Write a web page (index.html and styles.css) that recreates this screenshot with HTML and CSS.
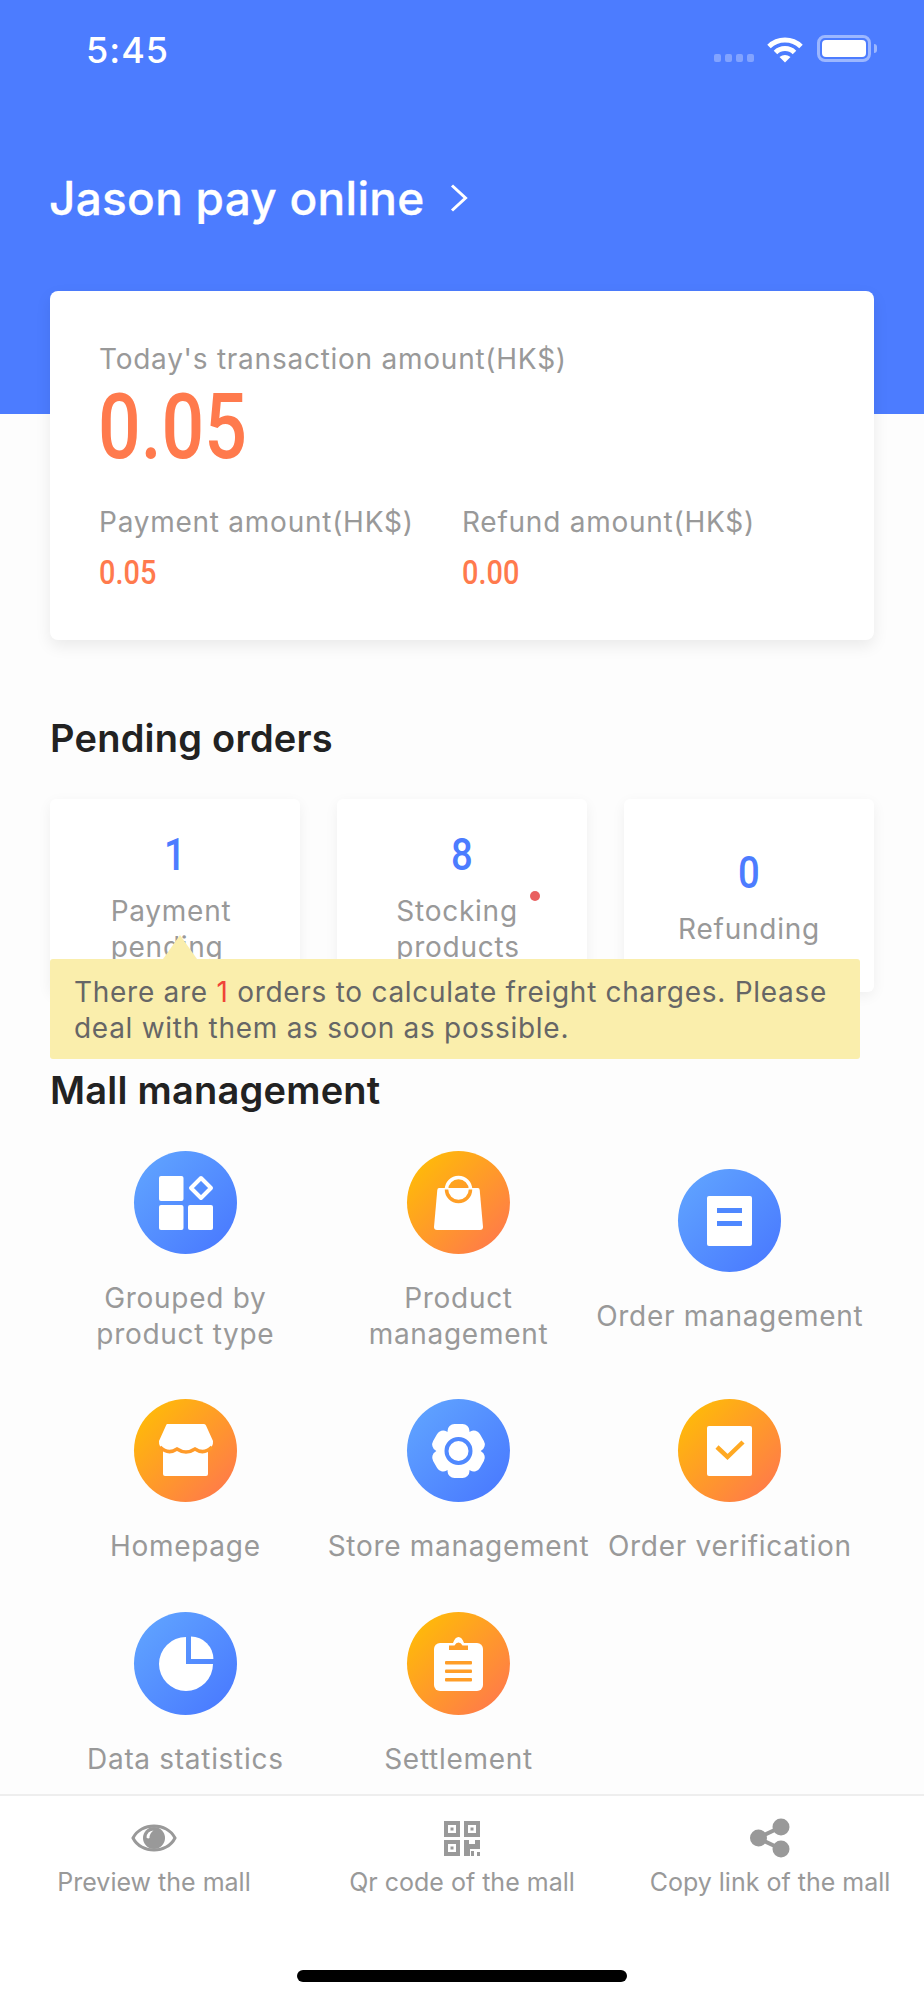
FILE: index.html
```html
<!DOCTYPE html>
<html lang="en">
<head>
<meta charset="utf-8">
<title>Jason pay online</title>
<link rel="stylesheet" href="styles.css">
</head>
<body>
<div class="app">
  <header class="hero">
    <div class="status">
      <span class="time">5:45</span>
      <div class="status-icons">
        <div class="signal"><i></i><i></i><i></i><i></i></div>
        <svg class="wifi" width="38" height="28" viewBox="0 0 38 28"><path d="M3 11.5A23 23 0 0 1 35 11.5M9.5 17.5A13.5 13.5 0 0 1 28.500 17.500" fill="none" stroke="#fff" stroke-width="5"/><path d="M13.500 22Q19 18 24.500 22L19 27.500Z" fill="#fff"/></svg>
        <div class="battery"><div class="battery-fill"></div></div>
        <div class="battery-nub"></div>
      </div>
    </div>
    <div class="shop">
      <span class="shop-name">Jason pay online</span>
      <svg class="chevron" width="18" height="28" viewBox="0 0 18 28"><path d="M2 1.500L15.500 14L2 26.500" fill="none" stroke="#fff" stroke-width="3"/></svg>
    </div>
  </header>

  <section class="summary">
    <div class="muted-label">Today's transaction amount(HK$)</div>
    <div class="amount-big"><span>0.05</span></div>
    <div class="summary-row">
      <div class="summary-col">
        <div class="muted-label">Payment amount(HK$)</div>
        <div class="amount-small"><span>0.05</span></div>
      </div>
      <div class="summary-col">
        <div class="muted-label">Refund amount(HK$)</div>
        <div class="amount-small"><span>0.00</span></div>
      </div>
    </div>
  </section>

  <h2 class="heading">Pending orders</h2>
  <section class="pending">
    <div class="pending-card">
      <div class="pending-num"><span>1</span></div>
      <div class="pending-label shifted">Payment<br>pending</div>
    </div>
    <div class="pending-card">
      <div class="pending-num"><span>8</span></div>
      <div class="pending-label shifted">Stocking<br>products<i class="red-dot"></i></div>
    </div>
    <div class="pending-card">
      <div class="pending-num"><span>0</span></div>
      <div class="pending-label">Refunding</div>
    </div>
    <div class="tip">
      There are <em class="tip-count">1</em> orders to calculate freight charges. Please deal with them as soon as possible.
    </div>
  </section>

  <h2 class="heading">Mall management</h2>
  <section class="mall">
    <div class="mall-item">
      <div class="circle blue">
        <svg viewBox="0 0 103 103"><g fill="#fff"><rect x="25" y="25" width="24.500" height="25" rx="2"/><rect x="25" y="54" width="24.500" height="25" rx="2"/><rect x="54" y="54" width="25" height="25" rx="2"/></g><path d="M67 27L77 37L67 47L57 37Z" fill="none" stroke="#fff" stroke-width="4" stroke-linejoin="round"/></svg>
      </div>
      <div class="mall-label">Grouped by<br>product type</div>
    </div>
    <div class="mall-item">
      <div class="circle orange">
        <svg viewBox="0 0 103 103"><path d="M32 37H71Q72.500 37 72.700 39L76 76Q76 79 73 79H30Q27 79 27 76L30.300 39Q30.500 37 32 37Z" fill="#fff"/><path d="M39.500 38.500A12 12 0 0 1 63.500 38.500" fill="none" stroke="#fff" stroke-width="3.500"/><path d="M39.500 38.500A12 12 0 0 0 63.500 38.500" fill="none" stroke="#ff9f26" stroke-width="3.500"/></svg>
      </div>
      <div class="mall-label">Product<br>management</div>
    </div>
    <div class="mall-item one-line">
      <div class="circle blue">
        <svg viewBox="0 0 103 103"><rect x="29" y="27" width="45" height="50" rx="2" fill="#fff"/><rect x="39" y="39" width="25" height="5" fill="#4f88ff"/><rect x="39" y="52" width="25" height="5" fill="#4f88ff"/></svg>
      </div>
      <div class="mall-label">Order management</div>
    </div>
    <div class="mall-item">
      <div class="circle orange">
        <svg viewBox="0 0 103 103"><rect x="29" y="50" width="45" height="27" rx="2" fill="#fff"/><path d="M33 25H70Q71.500 25 72 26.500L79 42Q79.500 48 74 50.500Q68 53 61.500 49Q57 53 52 53Q47 53 43 49Q36 53 30 50.500Q24.500 48 25 42L32 26.500Q32.500 25 33 25Z" fill="#fff"/><path d="M26 48Q34 56 43 50Q52 56 61 50Q70 56 78 48" fill="none" stroke="#ff9b2a" stroke-width="3.500"/></svg>
      </div>
      <div class="mall-label">Homepage</div>
    </div>
    <div class="mall-item">
      <div class="circle blue">
        <svg viewBox="0 0 103 103"><g fill="#fff"><circle cx="51.500" cy="52" r="22"/><rect x="40.500" y="25" width="22" height="54" rx="7"/><rect x="40.500" y="25" width="22" height="54" rx="7" transform="rotate(60 51.500 52)"/><rect x="40.500" y="25" width="22" height="54" rx="7" transform="rotate(120 51.500 52)"/></g><circle cx="51.500" cy="52" r="12" fill="none" stroke="#5089ff" stroke-width="4"/></svg>
      </div>
      <div class="mall-label">Store management</div>
    </div>
    <div class="mall-item">
      <div class="circle orange">
        <svg viewBox="0 0 103 103"><rect x="29" y="27" width="45" height="50" rx="2" fill="#fff"/><path d="M39 48L49.500 58L65 43" fill="none" stroke="#ffa922" stroke-width="4.500"/></svg>
      </div>
      <div class="mall-label">Order verification</div>
    </div>
    <div class="mall-item">
      <div class="circle blue">
        <svg viewBox="0 0 103 103"><path d="M52 25A27 27 0 1 0 79 52H52Z" fill="#fff"/><path d="M57 24.600A22.400 22.400 0 0 1 79.400 47H57Z" fill="#fff"/></svg>
      </div>
      <div class="mall-label">Data statistics</div>
    </div>
    <div class="mall-item">
      <div class="circle orange">
        <svg viewBox="0 0 103 103"><rect x="27" y="31" width="49" height="48" rx="6" fill="#fff"/><path d="M38 31H46Q48 25 51.500 25Q55 25 57 31H65V38H38Z" fill="#fff"/><path d="M42 38V33.500H47.500Q49 30.500 51.500 30.500Q54 30.500 55.500 33.500H61V38Z" fill="#ff9e28"/><g fill="#ff9e28"><rect x="38" y="49" width="27" height="3.500" rx="1"/><rect x="38" y="57.500" width="27" height="3.500" rx="1"/><rect x="38" y="66" width="27" height="3.500" rx="1"/></g></svg>
      </div>
      <div class="mall-label">Settlement</div>
    </div>
  </section>

  <nav class="tabs">
    <div class="tab">
      <div class="tab-icon">
        <svg width="46" height="30" viewBox="0 0 46 30"><path d="M2 15C10 -1 36 -1 44 15C36 31 10 31 2 15Z" fill="none" stroke="#999" stroke-width="3"/><circle cx="23" cy="15" r="11" fill="#999"/><path d="M15.500 14.500Q16 8 22.500 7.500Q18.500 10 18.500 15Q17 16 15.500 14.500Z" fill="#fff"/></svg>
      </div>
      <span class="tab-label">Preview the mall</span>
    </div>
    <div class="tab">
      <div class="tab-icon">
        <svg width="36" height="35" viewBox="0 0 36 35"><g fill="none" stroke="#999" stroke-width="4"><rect x="2" y="2" width="12" height="12"/><rect x="22" y="2" width="12" height="12"/><rect x="2" y="21" width="12" height="12"/></g><g fill="#999"><rect x="6.500" y="6.500" width="3" height="3"/><rect x="26.500" y="6.500" width="3" height="3"/><rect x="6.500" y="25.500" width="3" height="3"/><path d="M20 19H25V23H31V19H36V28H26V35H20Z"/><rect x="27" y="30" width="3" height="5"/><rect x="33" y="31" width="3" height="4"/></g></svg>
      </div>
      <span class="tab-label">Qr code of the mall</span>
    </div>
    <div class="tab">
      <div class="tab-icon">
        <svg width="40" height="40" viewBox="0 0 40 40"><path d="M31 9L8 20L31 31" fill="none" stroke="#999" stroke-width="4"/><g fill="#999"><circle cx="31" cy="9" r="8.500"/><circle cx="8.500" cy="20" r="8.500"/><circle cx="31" cy="31" r="8.500"/></g></svg>
      </div>
      <span class="tab-label">Copy link of the mall</span>
    </div>
  </nav>
  <div class="home-indicator"></div>
</div>
</body>
</html>
```

FILE: styles.css
```css
* { box-sizing: border-box; }
html, body { margin: 0; padding: 0; }
body { font-family: Inter, "Noto Sans", sans-serif; background: #fdfdfd; }
.app { position: relative; width: 924px; height: 2000px; display: flex; flex-direction: column; background: #fdfdfd; overflow: hidden; }

.hero { height: 414px; flex: none; background: #4c7cff; color: #fff; }
.status { display: flex; justify-content: space-between; align-items: flex-start; padding: 29px 47px 0 86px; height: 165px; }
.time { font-size: 36px; line-height: 42px; font-weight: 500; letter-spacing: 1px; }
.status-icons { display: flex; align-items: flex-start; padding-top: 6px; }
.signal { display: flex; gap: 4px; margin: 19px 12px 0 0; }
.signal i { width: 7px; height: 8px; border-radius: 2px; background: rgba(255, 255, 255, .3); }
.wifi { margin-right: 13px; }
.battery { width: 54px; height: 27px; border: 3px solid rgba(255, 255, 255, .45); border-radius: 8px; padding: 2px; }
.battery-fill { height: 100%; border-radius: 4px; background: #fff; }
.battery-nub { width: 3px; height: 9px; margin: 9px 0 0 3px; border-radius: 0 3px 3px 0; background: rgba(255, 255, 255, .45); }
.shop { display: flex; align-items: center; gap: 26px; padding-left: 49px; height: 66px; }
.shop-name { font-size: 46px; line-height: 66px; font-weight: 500; letter-spacing: .25px; -webkit-text-stroke: .3px #fff; }

.summary { flex: none; margin: -123px 50px 0; height: 349px; padding: 50px 49px 0; background: #fff; border-radius: 8px; box-shadow: 0 6px 16px rgba(0, 0, 0, .08); }
.muted-label { font-size: 28px; line-height: 36px; color: #999; letter-spacing: .75px; white-space: nowrap; }
.amount-big { margin: 11px 0 0 -1px; height: 80px; font-family: Roboto, sans-serif; font-size: 90px; line-height: 80px; font-weight: 500; color: #ff7a4d; }
.amount-big span, .amount-small span { display: inline-block; transform-origin: left center; }
.amount-big span { transform: scaleX(.835); }
.summary-row { display: flex; margin-top: 36px; }
.summary-col { width: 364.5px; }
.amount-small { margin-top: 14px; height: 36px; font-family: Roboto, sans-serif; font-size: 34px; line-height: 36px; font-weight: 500; color: #ff7a4d; }
.amount-small span { transform: scaleX(.85); }

.heading { flex: none; margin: 76px 50px 39px; font-size: 38px; line-height: 44px; font-weight: 600; letter-spacing: .23px; color: #222; }
.pending { flex: none; position: relative; display: flex; justify-content: space-between; margin: 0 50px; height: 193px; }
.pending-card { width: 250px; height: 193px; padding-top: 7px; display: flex; flex-direction: column; align-items: center; justify-content: center; background: #fff; border-radius: 6px; box-shadow: 0 4px 14px rgba(0, 0, 0, .06); }
.pending-num { height: 44px; font-family: Roboto, sans-serif; font-size: 45px; line-height: 44px; font-weight: 500; color: #4c7cff; }
.pending-num span { display: inline-block; transform: scaleX(.85); }
.pending-label { position: relative; margin-top: 16px; font-size: 28px; line-height: 36px; color: #999; letter-spacing: .75px; }
.pending-label.shifted { margin-right: 8px; }
.red-dot { position: absolute; right: -20px; top: -2px; width: 10px; height: 10px; border-radius: 50%; background: #e96060; }
.tip { position: absolute; left: 0; top: 160px; width: 810px; height: 100px; padding: 16px 24px 0; background: #faeeac; border-radius: 3px; font-size: 28px; line-height: 35.5px; color: #666; letter-spacing: .72px; }
.tip::before { content: ""; position: absolute; left: 113px; top: -24px; border: 17px solid transparent; border-top: 0; border-bottom: 24px solid #faeeac; }
.tip-count { font-style: normal; color: #f04438; }

.mall { flex: none; display: grid; grid-template-columns: 272.67px 273.66px 269px; grid-template-rows: 248px 213px 182px; margin: 0 0 0 49px; }
.mall-item { display: flex; flex-direction: column; align-items: center; }
.mall-item.one-line { padding-top: 18px; }
.circle { width: 103px; height: 103px; flex: none; border-radius: 50%; }
.circle svg { display: block; width: 103px; height: 103px; }
.circle.blue { background: linear-gradient(135deg, #5fa2ff 10%, #4a7bff 90%); }
.circle.orange { background: linear-gradient(135deg, #ffb90a 12%, #ff7c48 88%); }
.mall-label { margin-top: 26px; font-size: 28px; line-height: 36px; color: #999; text-align: center; white-space: nowrap; letter-spacing: .7px; }

.tabs { display: flex; flex: 1; border-top: 2px solid #eee; background: #fff; padding-top: 22px; }
.tab { width: 308px; display: flex; flex-direction: column; align-items: center; }
.tab-icon { height: 40px; display: flex; align-items: center; }
.tab-label { margin-top: 8px; font-size: 25px; line-height: 32px; color: #999; }
.home-indicator { position: absolute; left: 297px; top: 1970px; width: 330px; height: 12px; border-radius: 6px; background: #000; }
```
